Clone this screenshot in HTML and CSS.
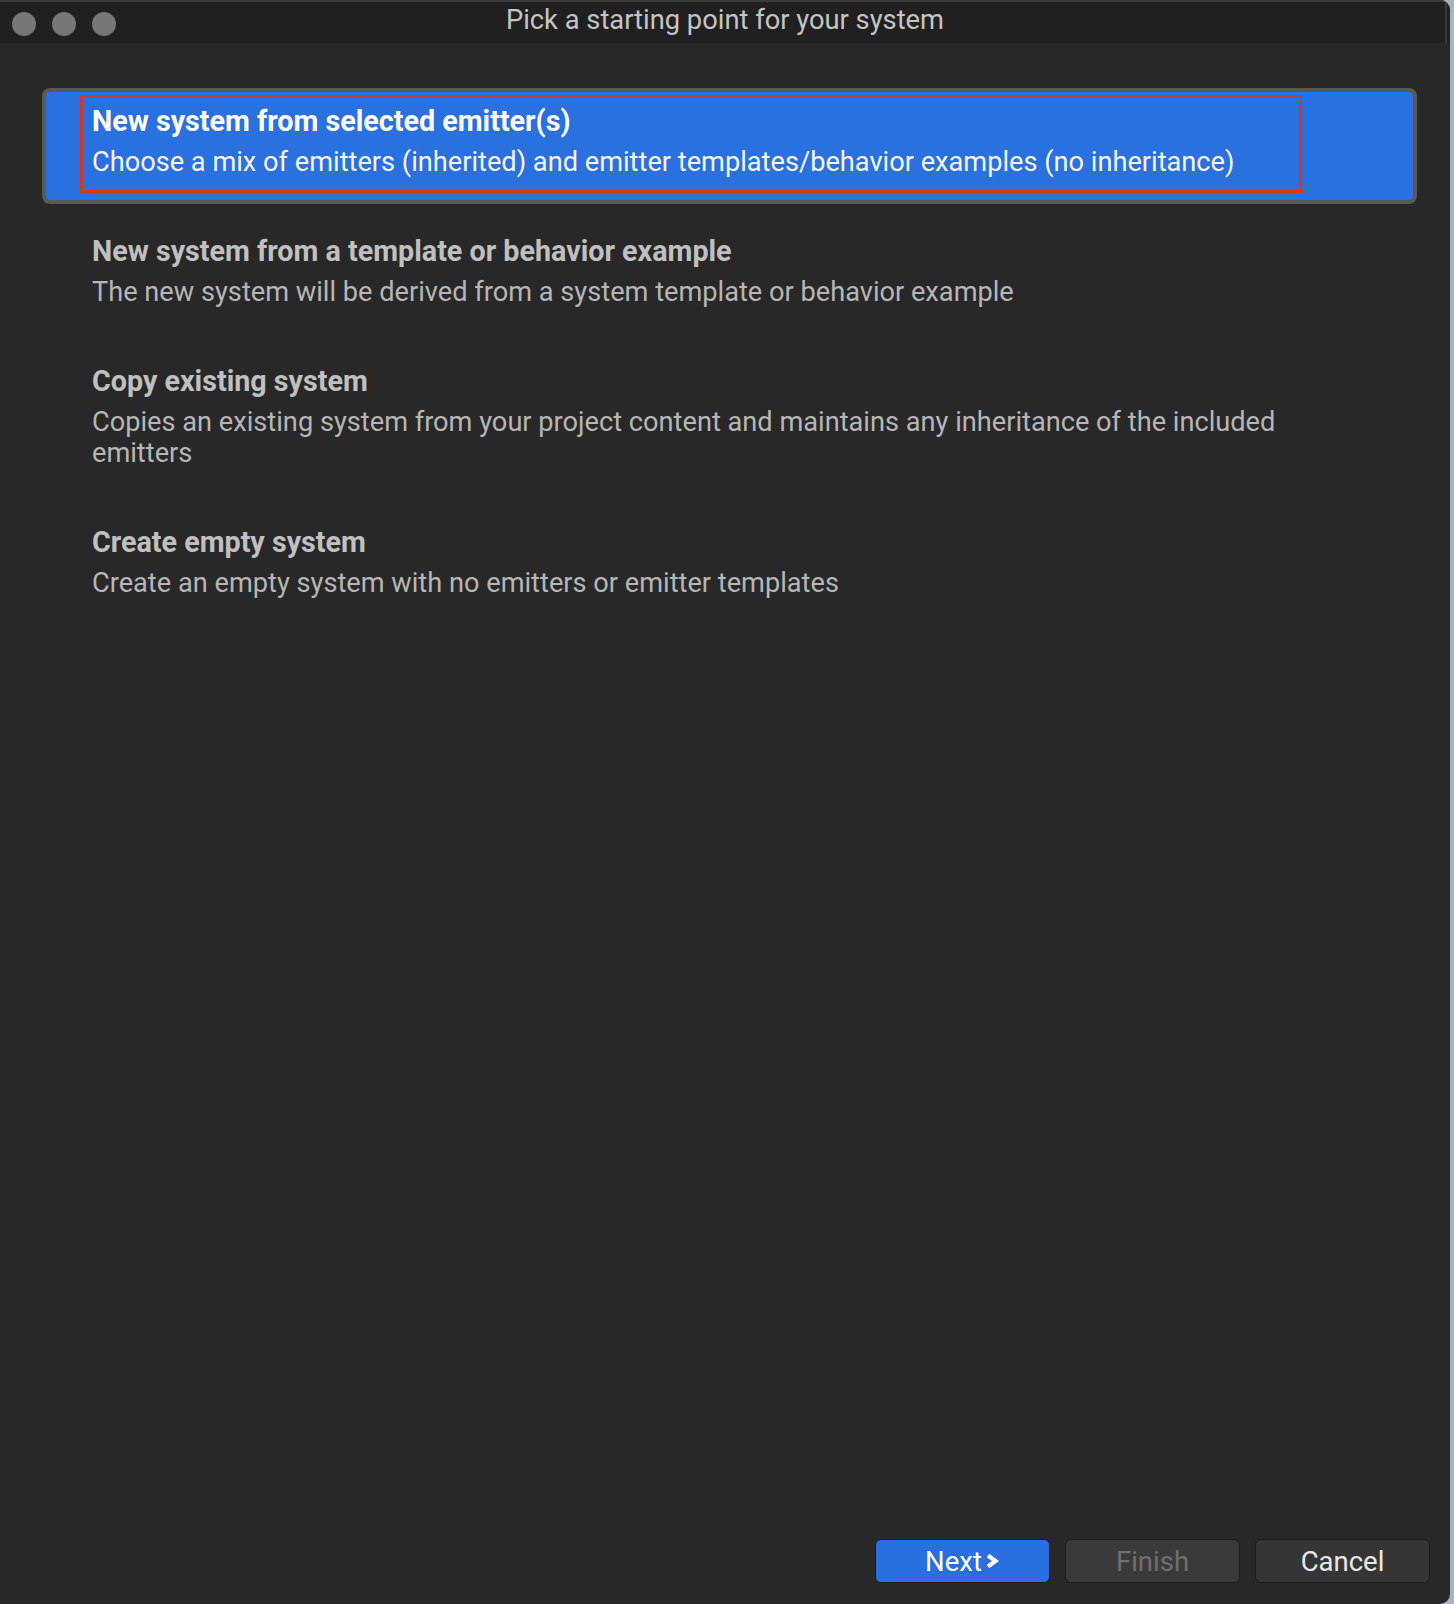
FILE: index.html
```html
<!DOCTYPE html>
<html>
<head>
<meta charset="utf-8">
<link rel="stylesheet" href="styles.css">
</head>
<body>
<div class="window">
  <div class="titlebar">
    <div class="lights">
      <span class="light"></span>
      <span class="light"></span>
      <span class="light"></span>
    </div>
    <div class="title">Pick a starting point for your system</div>
    <div class="spacer"></div>
  </div>
  <div class="list">
    <div class="item selected">
      <div class="cell">
        <div class="item-title">New system from selected emitter(s)</div>
        <div class="item-desc">Choose a mix of emitters (inherited) and emitter templates/behavior examples (no inheritance)</div>
      </div>
    </div>
    <div class="item">
      <div class="cell">
        <div class="item-title">New system from a template or behavior example</div>
        <div class="item-desc">The new system will be derived from a system template or behavior example</div>
      </div>
    </div>
    <div class="item">
      <div class="cell">
        <div class="item-title">Copy existing system</div>
        <div class="item-desc">Copies an existing system from your project content and maintains any inheritance of the included emitters</div>
      </div>
    </div>
    <div class="item">
      <div class="cell">
        <div class="item-title">Create empty system</div>
        <div class="item-desc">Create an empty system with no emitters or emitter templates</div>
      </div>
    </div>
  </div>
  <div class="footer">
    <button class="btn btn-primary">Next<svg class="chev" width="15" height="16" viewBox="0 0 15 16"><polyline points="3,2.5 10.5,8 3,13.5" fill="none" stroke="#ffffff" stroke-width="4.2" stroke-linecap="butt" stroke-linejoin="miter"/></svg></button>
    <button class="btn btn-disabled">Finish</button>
    <button class="btn btn-default">Cancel</button>
  </div>
</div>
</body>
</html>
```
FILE: styles.css
```css
html, body {
  margin: 0;
  padding: 0;
}
body {
  background: #a9b3c4;
  font-family: Roboto, "Liberation Sans", sans-serif;
  width: 1454px;
  height: 1604px;
  overflow: hidden;
}
.window {
  width: 1450px;
  height: 1604px;
  background: #282828;
  border-radius: 0 10px 10px 0;
  overflow: hidden;
  display: flex;
  flex-direction: column;
}
.titlebar {
  height: 41px;
  border-top: 2px solid #3a3a3a;
  background: #202020;
  display: grid;
  grid-template-columns: 1fr auto 1fr;
  align-items: start;
  flex: none;
}
.lights {
  display: flex;
  gap: 16px;
  padding: 10px 0 0 12px;
}
.light {
  width: 24px;
  height: 24px;
  border-radius: 50%;
  background: #767676;
}
.title {
  font-size: 27.3px;
  line-height: 37px;
  color: #c4c4c4;
  white-space: nowrap;
}
.spacer {
  height: 41px;
  margin-right: 3px;
  border-right: 2px solid #3a3a3a;
  justify-self: end;
}
.list {
  padding: 45px 33px 0 42px;
  display: flex;
  flex-direction: column;
  gap: 14px;
}
.item {
  border: 4px solid transparent;
  border-radius: 8px;
}
.item.selected {
  border-color: #595959;
  background: #2a70df;
}
.cell {
  margin: 3px 0 7px 34px;
  width: 1207px;
  border: 3px solid transparent;
  padding: 8px 0 12px 9px;
}
.item.selected .cell {
  border-color: #cc3b25;
}
.item-title {
  font-size: 28.7px;
  font-weight: 700;
  line-height: 31px;
  color: #c0c0c0;
  margin-bottom: 10px;
  white-space: nowrap;
}
.item-desc {
  font-size: 27.2px;
  line-height: 31px;
  color: #b6b6b6;
}
.item.selected .item-title {
  color: #ffffff;
}
.item.selected .item-desc {
  color: #f4f4f4;
  white-space: nowrap;
}
.footer {
  margin-top: auto;
  display: flex;
  justify-content: flex-end;
  gap: 15px;
  padding: 0 20px 21px 0;
}
.btn {
  width: 175px;
  height: 44px;
  border: 1px solid #1b1b1b;
  border-radius: 6px;
  font-family: Roboto, "Liberation Sans", sans-serif;
  font-size: 27.5px;
  display: flex;
  align-items: center;
  justify-content: center;
  padding: 0;
}
.btn-primary {
  background: #2a6fdf;
  color: #ffffff;
}
.chev {
  margin-left: 3px;
}
.btn-disabled {
  background: #3a3a3a;
  color: #6f6f6f;
}
.btn-default {
  background: #353535;
  color: #e8e8e8;
}
```
